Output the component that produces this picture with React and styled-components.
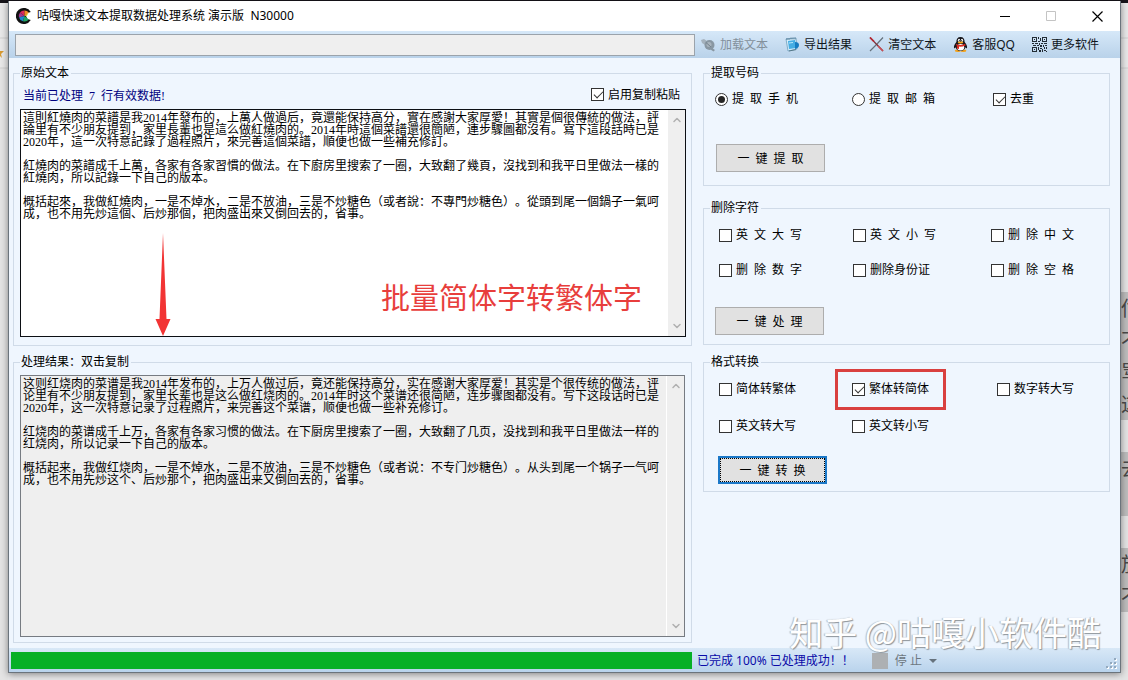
import { useState } from "react";
import styled, { createGlobalStyle, css } from 'styled-components'
import { ChevronDown, ChevronUp } from 'lucide-react'

const GlobalStyle = createGlobalStyle`
  * { box-sizing: border-box; }

  body {
    margin: 0;
    background: #e6e6e7;
  }

  body, button, input, textarea {
    font-family: "Liberation Serif", "Noto Sans CJK SC", sans-serif;
    font-size: 12px;
    text-spacing-trim: space-all;
    color: #000;
  }
`

const uiFont = css`
  font-family: "Noto Sans", "Noto Sans CJK SC", sans-serif;
`

const Desktop = styled.div`
  display: flex;
  min-height: 100vh;
  overflow: hidden;
`

const Edge = styled.div`
  flex: none;
  width: ${p => p.$width}px;
  border-top: 3px solid #17151a;
  background: linear-gradient(#e9e9e9, #e9e9e9 34px, #d0d0d0 35px, #e9e9e9 36px, #e9e9e9 64px, #d0d0d0 65px, #e4e4e4 66px);
  overflow: hidden;
`

const EdgeText = styled.div`
  margin-top: ${p => p.$gap}px;
  background: #bdbdbd;
  font: 20px/32px "Noto Sans CJK SC", sans-serif;
  color: #4a4a4a;
`

const Star = styled.svg`
  display: block;
  margin-top: 46px;
`

const Window = styled.main`
  position: relative;
  flex: 1;
  min-width: 0;
  display: flex;
  flex-direction: column;
  margin: 1px 0 7px;
  border: 1px solid #6b747c;
  border-top: 0;
  background: #eff6fe;
  box-shadow: 0 1px 7px rgba(0, 0, 0, .45), 0 -1px 0 #17151a;
`

const TitleBar = styled.header`
  ${uiFont}
  display: flex;
  align-items: center;
  height: 30px;
  padding-left: 7px;
  background: #fff;
`

const Title = styled.h1`
  flex: 1;
  margin: 0 0 0 5px;
  font-size: 12px;
  font-weight: 400;
  line-height: 16px;
  white-space: pre;
`

const CaptionButton = styled.button`
  display: flex;
  align-items: center;
  justify-content: center;
  width: 46px;
  height: 29px;
  padding: 0;
  border: 0;
  background: none;
`

const ToolBar = styled.div`
  display: flex;
  align-items: center;
  height: 27px;
  padding: 0 21px 0 6px;
  background: linear-gradient(#d6e8f8, #b9d2ea);
`

const PathInput = styled.input`
  flex: 1;
  min-width: 0;
  height: 22px;
  padding: 0 4px;
  border: 1px solid #9ba3ab;
  background: #efefef;
`

const Tools = styled.div`
  display: flex;
  justify-content: space-between;
  width: 404px;
  padding-left: 6px;
`

const ToolButton = styled.button`
  ${uiFont}
  display: flex;
  align-items: center;
  gap: 4px;
  padding: 0;
  border: 0;
  background: none;
  line-height: 16px;
  white-space: nowrap;
  color: #10161c;

  &:disabled { color: #83909b; }
`

const Body = styled.div`
  flex: 1;
  display: grid;
  grid-template-columns: minmax(0, 1fr) 407px;
  column-gap: 11px;
  padding: 8px 10px 5px 4px;
`

const Column = styled.div`
  display: flex;
  flex-direction: column;
`

const Group = styled.fieldset`
  min-width: 0;
  margin: ${p => p.$top || 0}px 0 0;
  padding: ${p => p.$pad};
  border: 1px solid #d0dbe8;
`

const TextGroup = styled(Group)`
  flex: 1 1 ${p => p.$basis}px;
  display: flex;
  flex-direction: column;
`

const Legend = styled.legend`
  padding: 0 2px 0 1px;
  line-height: 14px;
`

const InfoRow = styled.div`
  display: flex;
  align-items: center;
  justify-content: space-between;
  height: 29px;
  padding: 0 6px 0 3px;
`

const Count = styled.span`
  white-space: pre;
  color: #000080;
`

const TextFrame = styled.div`
  position: relative;
  flex: 1;
  display: flex;
  border: 1px solid ${p => p.$muted ? '#767b82' : '#0c0f14'};
  background: ${p => p.$muted ? '#efefef' : '#fff'};
`

const TextBox = styled.textarea`
  flex: 1;
  min-width: 0;
  padding: 2px 4px 2px 2px;
  border: 0;
  outline: 0;
  background: none;
  line-height: 12px;
  resize: none;
  overflow: hidden;
`

const ScrollTrack = styled.div`
  display: flex;
  flex-direction: column;
  align-items: center;
  justify-content: space-between;
  width: 18px;
  padding: 4px 0;
  border-left: 1px solid #fff;
  background: #efefef;
  color: #b0b0b0;
`

const Arrow = styled.svg`
  position: absolute;
  left: 134px;
  bottom: 0;
`

const Note = styled.strong`
  position: absolute;
  right: 43px;
  bottom: 20px;
  font: 400 29px/40px "Noto Sans CJK SC", sans-serif;
  color: #e83e3c;
`

const Options = styled.div`
  display: grid;
  grid-template-columns: ${p => p.$cols};
  row-gap: ${p => p.$gap || 0}px;
  margin-left: ${p => p.$indent}px;
`

const Option = styled.label`
  position: relative;
  justify-self: start;
  display: flex;
  align-items: center;
  gap: 4px;
  height: 14px;
  line-height: 14px;
  white-space: pre;
`

const Box = styled.input`
  position: relative;
  appearance: none;
  width: 13px;
  height: 13px;
  margin: 0;
  border: 1px solid #333;
  border-radius: ${p => p.type === 'radio' ? '50%' : 0};
  background: #fff;

  &:checked::after {
    content: "";
    position: absolute;
    ${p => p.type === 'radio' ? css`
      inset: 2px;
      border-radius: 50%;
      background: #262626;
    ` : css`
      left: 4px;
      top: 0;
      width: 4px;
      height: 8px;
      border: solid #333;
      border-width: 0 1px 1px 0;
      transform: rotate(45deg);
    `}
  }
`

const Highlight = styled.span`
  position: absolute;
  inset: -13px -17px -14px;
  border: 3px solid #d9403f;
  pointer-events: none;
`

const ActionButton = styled.button`
  display: block;
  width: 109px;
  height: 28px;
  margin: ${p => p.$top}px 0 0 ${p => p.$indent}px;
  padding: 0;
  border: 1px solid #adadad;
  background: #e1e1e1;
  white-space: pre;

  ${p => p.$focused && css`
    border: 2px solid #1b78c8;
    outline: 1px dotted #000;
    outline-offset: -3px;
  `}
`

const StatusBar = styled.footer`
  ${uiFont}
  position: relative;
  display: flex;
  align-items: center;
  height: 24px;
  padding-left: 2px;
  background: linear-gradient(#d8e8f7, #b9d3ec);
`

const Progress = styled.progress`
  flex: 1;
  min-width: 0;
  height: 17px;
  appearance: none;
  border: 0;

  &::-webkit-progress-bar { background: #e6e6e6; }
  &::-webkit-progress-value { background: #06b025; }
`

const StatusInfo = styled.div`
  display: flex;
  align-items: center;
  width: 428px;
  padding: 1px 0 0 5px;
  line-height: 16px;
  color: #0a0aa8;
`

const StopButton = styled.button`
  ${uiFont}
  display: flex;
  align-items: center;
  gap: 7px;
  margin-left: 18px;
  padding: 0;
  border: 0;
  background: none;
  line-height: 16px;
  white-space: pre;

  &:disabled { color: #6d7780; }
`

const StopIcon = styled.span`
  width: 16px;
  height: 16px;
  background: #adb0b3;
`

const Grip = styled.svg`
  position: absolute;
  right: 2px;
  bottom: 2px;
`

const Watermark = styled.div`
  position: absolute;
  right: 19px;
  bottom: 18px;
  font: 400 34px/44px "Noto Sans CJK SC", sans-serif;
  color: #fff;
  text-shadow: 1px 1px 1px #8e959b, -1px 0 1px #b3b9be;
  pointer-events: none;
`

const SOURCE = `這則紅燒肉的菜譜是我2014年發布的，上萬人做過后，竟還能保持高分，實在感謝大家厚愛！其實是個很傳統的做法，評論里有不少朋友提到，家里長輩也是這么做紅燒肉的。2014年時這個菜譜還很簡陋，連步驟圖都沒有。寫下這段話時已是2020年，這一次特意記錄了過程照片，來完善這個菜譜，順便也做一些補充修訂。

紅燒肉的菜譜成千上萬，各家有各家習慣的做法。在下廚房里搜索了一圈，大致翻了幾頁，沒找到和我平日里做法一樣的紅燒肉，所以記錄一下自己的版本。

概括起來，我做紅燒肉，一是不焯水，二是不放油，三是不炒糖色（或者說：不專門炒糖色）。從頭到尾一個鍋子一氣呵成，也不用先炒這個、后炒那個，把肉盛出來又倒回去的，省事。`

const RESULT = `这则红烧肉的菜谱是我2014年发布的，上万人做过后，竟还能保持高分，实在感谢大家厚爱！其实是个很传统的做法，评论里有不少朋友提到，家里长辈也是这么做红烧肉的。2014年时这个菜谱还很简陋，连步骤图都没有。写下这段话时已是2020年，这一次特意记录了过程照片，来完善这个菜谱，顺便也做一些补充修订。

红烧肉的菜谱成千上万，各家有各家习惯的做法。在下厨房里搜索了一圈，大致翻了几页，没找到和我平日里做法一样的红烧肉，所以记录一下自己的版本。

概括起来，我做红烧肉，一是不焯水，二是不放油，三是不炒糖色（或者说：不专门炒糖色）。从头到尾一个锅子一气呵成，也不用先炒这个、后炒那个，把肉盛出来又倒回去的，省事。`

// labels are padded out with spaces to fill four-character slots
const spread = text => text.split('').join('  ')

const Logo = () => (
  <svg width="16" height="16" viewBox="0 0 16 16" aria-hidden="true">
    <path d="M14.800 4A8 8 0 1 0 14.800 12L11.500 11L10 8L11.500 5Z" fill="#111" />
    <path d="M8.500 8L4 4.500A5.500 5.500 0 0 1 8.500 2.500Z" fill="#d8275c" />
    <path d="M8.500 8V2.500A5.500 5.500 0 0 1 12.800 4.500Z" fill="#f08a24" />
    <path d="M8.500 8L3 9.500A5.500 5.500 0 0 1 4 4.500Z" fill="#a3358f" />
    <path d="M8.500 8L7 13.300A5.500 5.500 0 0 1 3 9.500Z" fill="#1c86d1" />
    <path d="M8.500 8L12.800 11.500A5.500 5.500 0 0 1 7 13.300Z" fill="#20a565" />
    <path d="M8.500 8L12.800 4.500L10.800 8Z" fill="#e9d534" />
  </svg>
)

const LoadIcon = () => (
  <svg width="15" height="15" viewBox="0 0 15 15" aria-hidden="true">
    <path d="M0 3L3 2L6 4L4 8L1 6Z" fill="#a5b2bd" />
    <circle cx="8.500" cy="8" r="5" fill="#8997a2" />
    <circle cx="8" cy="7.500" r="2.500" fill="#a9b4bd" />
    <path d="M11 11L14 13L12.500 14.500L9.500 12.500Z" fill="#8997a2" />
    <path d="M5 5.500L10 10" stroke="#74828d" />
  </svg>
)

const ExportIcon = () => (
  <svg width="15" height="15" viewBox="0 0 15 15" aria-hidden="true">
    <path d="M1 2L11 1L12 12L3 14Z" fill="#d5eefc" stroke="#6d9dba" strokeWidth=".8" />
    <path d="M3 4L10 3L11 11L4 12Z" fill="#45ade3" />
    <path d="M2 1v2M4 1v2M6 .5v2M8 .5v2M10 .5v2" stroke="#426b85" strokeWidth=".8" />
    <path d="M10 5Q14 5 14 8T10 12Z" fill="#167cc1" />
    <path d="M4 6L8 5.5" stroke="#b9e7fc" strokeWidth="1" />
    <path d="M4 14L11 12.6" stroke="#567989" strokeWidth="1" />
  </svg>
)

const ClearIcon = () => (
  <svg width="15" height="15" viewBox="0 0 15 15" aria-hidden="true">
    <path d="M14 .5L8 7L1 14" fill="none" stroke="#65717c" strokeWidth="1.2" />
    <path d="M1 .5L14 14" fill="none" stroke="#7e3038" strokeWidth="1.2" />
    <path d="M1 .5L5 4.5" stroke="#b92732" strokeWidth="1.6" />
    <path d="M9 9L14 14" stroke="#c94e55" strokeWidth="1.6" />
  </svg>
)

const PenguinIcon = () => (
  <svg width="15" height="15" viewBox="0 0 15 15" aria-hidden="true">
    <ellipse cx="4.8" cy="13.8" rx="3" ry="1.2" fill="#f2a21c" />
    <ellipse cx="10.4" cy="13.8" rx="3" ry="1.2" fill="#f2a21c" />
    <path d="M7.5 0C4.6 0 3.3 2 3.4 5C1.4 7.5.4 10 1.2 11.2C1.7 11.5 2.3 10.6 2.6 10.2C3.2 12.6 5 14 7.5 14S11.9 12.6 12.5 10.2C12.8 10.6 13.4 11.5 13.9 11.2C14.6 10 13.6 7.5 11.6 5C11.7 2 10.4 0 7.5 0Z" fill="#17161a" />
    <ellipse cx="7.6" cy="10.3" rx="3.6" ry="3.3" fill="#fff" />
    <ellipse cx="6" cy="3.2" rx="1.1" ry="1.5" fill="#fff" />
    <ellipse cx="9" cy="3.2" rx="1.1" ry="1.5" fill="#fff" />
    <circle cx="6.3" cy="3.4" r=".5" />
    <circle cx="8.7" cy="3.4" r=".5" />
    <ellipse cx="7.5" cy="5.5" rx="2.8" ry="1" fill="#f5a81c" />
    <path d="M2.8 6.8Q7.5 9.4 12.2 6.8L12.5 8.4Q9 10 6 9.6V12L3.8 11.6V9Z" fill="#dc2c23" />
  </svg>
)

const CodeIcon = () => (
  <svg width="15" height="15" viewBox="0 0 15 15" shapeRendering="crispEdges" aria-hidden="true">
    <path d="M.5 .5h4v4h-4zM10.5 .5h4v4h-4zM.5 10.5h4v4h-4z" fill="none" stroke="#222c35" />
    <path d="M2 2h1v1H2zM12 2h1v1h-1zM2 12h1v1H2zM6 0h1v2H6zM8 1h1v3H8zM6 4h2v1H6zM0 6h2v1H0zM3 6h3v1H3zM7 6h1v2H7zM9 6h2v1H9zM12 6h3v1h-3zM1 8h3v1H1zM5 8h2v1H5zM8 8h2v2H8zM11 8h1v2h-1zM13 8h2v1h-2zM6 10h1v3H6zM8 11h2v1H8zM10 12h1v3h-1zM12 10h1v2h-1zM14 10h1v2h-1zM7 13h2v2H7zM12 13h2v1h-2zM14 14h1v1h-1z" fill="#222c35" />
  </svg>
)

function ScrollBar() {
  return (
    <ScrollTrack aria-hidden="true">
      <ChevronUp size={12} strokeWidth={3} />
      <ChevronDown size={12} strokeWidth={3} />
    </ScrollTrack>
  )
}

function Check({ label, type = 'checkbox', name, checked, marked }) {
  return (
    <Option>
      <Box type={type} name={name} defaultChecked={checked} />
      {label}
      {marked && <Highlight />}
    </Option>
  )
}

export default function App() {
  const [source, setSource] = useState(SOURCE);

  return (
    <>
      <GlobalStyle />
      <Desktop>
        <Edge $width={8} aria-hidden="true">
          <Star width="4" height="9" viewBox="0 0 4 9"><path d="M0 2H4L1 5L2 9L0 7Z" fill="#d99b32" /></Star>
        </Edge>
        <Window>
          <TitleBar>
            <Logo />
            <Title>咕嘎快速文本提取数据处理系统 演示版{'  '}N30000</Title>
            <CaptionButton aria-label="最小化">
              <svg width="11" height="11"><path d="M0 5.5h10" stroke="#000" /></svg>
            </CaptionButton>
            <CaptionButton aria-label="最大化" disabled>
              <svg width="11" height="11"><path d="M.5 .5h9v9h-9z" fill="none" stroke="#c4c4c4" /></svg>
            </CaptionButton>
            <CaptionButton aria-label="关闭">
              <svg width="11" height="11"><path d="M.5 .5l10 10M10.5 .5l-10 10" stroke="#000" strokeWidth="1.2" /></svg>
            </CaptionButton>
          </TitleBar>

          <ToolBar>
            <PathInput aria-label="文件路径" readOnly />
            <Tools>
              <ToolButton disabled><LoadIcon />加载文本</ToolButton>
              <ToolButton><ExportIcon />导出结果</ToolButton>
              <ToolButton><ClearIcon />清空文本</ToolButton>
              <ToolButton><PenguinIcon />客服QQ</ToolButton>
              <ToolButton><CodeIcon />更多软件</ToolButton>
            </Tools>
          </ToolBar>

          <Body>
            <Column>
              <TextGroup $basis={280} $pad="0 5px 8px 6px">
                <Legend>原始文本</Legend>
                <InfoRow>
                  <Count>当前已处理{'  '}7{'  '}行有效数据!</Count>
                  <Check label="启用复制粘贴" checked />
                </InfoRow>
                <TextFrame>
                  <TextBox
                    aria-label="原始文本"
                    spellCheck={false}
                    value={source}
                    onChange={e => setSource(e.target.value)}
                  />
                  <ScrollBar />
                  <Arrow width="16" height="103" viewBox="0 0 16 103" aria-hidden="true">
                    <path d="M8 0L11.500 86H15.500L8 103L.5 86H4.500Z" fill="#f23434" />
                  </Arrow>
                  <Note>批量简体字转繁体字</Note>
                </TextFrame>
              </TextGroup>
              <TextGroup $basis={288} $top={9} $pad="6px 6px 5px">
                <Legend>处理结果：双击复制</Legend>
                <TextFrame $muted>
                  <TextBox aria-label="处理结果" spellCheck={false} readOnly value={RESULT} />
                  <ScrollBar />
                </TextFrame>
              </TextGroup>
            </Column>

            <Column>
              <Group $pad="12px 6px 13px">
                <Legend>提取号码</Legend>
                <Options $cols="137px 141px 1fr" $indent={5}>
                  <Check type="radio" name="extract" label={spread('提取手机')} checked />
                  <Check type="radio" name="extract" label={spread('提取邮箱')} />
                  <Check label="去重" checked />
                </Options>
                <ActionButton $top={38} $indent={6}>{spread('一键提取')}</ActionButton>
              </Group>
              <Group $top={15} $pad="13px 6px 9px">
                <Legend>删除字符</Legend>
                <Options $cols="134px 138px 1fr" $gap={21} $indent={9}>
                  <Check label={spread('英文大写')} />
                  <Check label={spread('英文小写')} />
                  <Check label={spread('删除中文')} />
                  <Check label={spread('删除数字')} />
                  <Check label="删除身份证" />
                  <Check label={spread('删除空格')} />
                </Options>
                <ActionButton $top={30} $indent={5}>{spread('一键处理')}</ActionButton>
              </Group>
              <Group $top={10} $pad="13px 6px 7px">
                <Legend>格式转换</Legend>
                <Options $cols="133px 145px 1fr" $gap={23} $indent={9}>
                  <Check label="简体转繁体" />
                  <Check label="繁体转简体" checked marked />
                  <Check label="数字转大写" />
                  <Check label="英文转大写" />
                  <Check label="英文转小写" />
                </Options>
                <ActionButton $top={23} $indent={8} $focused>{spread('一键转换')}</ActionButton>
              </Group>
            </Column>
          </Body>

          <StatusBar>
            <Progress value={100} max={100} aria-label="处理进度" />
            <StatusInfo>
              已完成 100% 已处理成功！！
              <StopButton disabled>
                <StopIcon />
                停 止
                <svg width="8" height="4" aria-hidden="true"><path d="M0 0H8L4 4Z" fill="#66727d" /></svg>
              </StopButton>
            </StatusInfo>
            <Grip width="12" height="12" viewBox="0 0 12 12" aria-hidden="true">
              <path d="M9 1h2v2H9zM5 5h2v2H5zM9 5h2v2H9zM1 9h2v2H1zM5 9h2v2H5zM9 9h2v2H9z" fill="#fff" />
              <path d="M8 0h2v2H8zM4 4h2v2H4zM8 4h2v2H8zM0 8h2v2H0zM4 8h2v2H4zM8 8h2v2H8z" fill="#93a9be" />
            </Grip>
          </StatusBar>
          <Watermark>知乎 @咕嘎小软件酷</Watermark>
        </Window>
        <Edge $width={7} aria-hidden="true">
          <EdgeText $gap={289}>估<br />不<br />骂<br />这</EdgeText>
          <EdgeText $gap={32}>去<br />&nbsp;</EdgeText>
          <EdgeText $gap={32}>放<br />不</EdgeText>
        </Edge>
      </Desktop>
    </>
  )
}
